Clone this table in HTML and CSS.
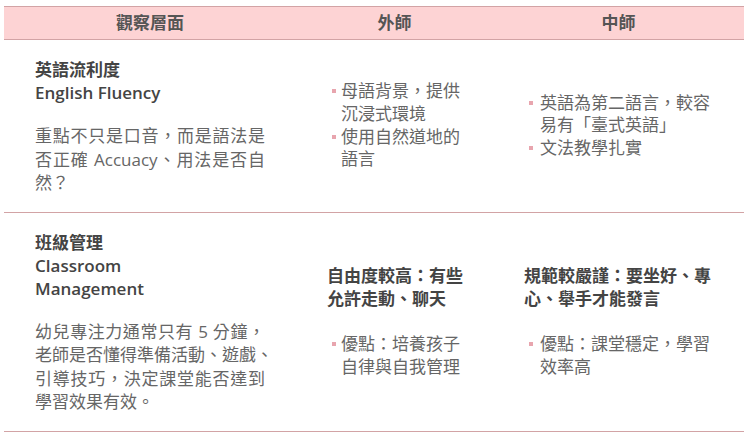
FILE: index.html
```html
<!DOCTYPE html>
<html lang="zh-Hant">
<head>
<meta charset="utf-8">
<title>外師與中師比較</title>
<link rel="stylesheet" href="styles.css">
</head>
<body>
<table class="cmp">
  <colgroup>
    <col class="c1">
    <col class="c2">
    <col class="c3">
  </colgroup>
  <thead>
    <tr><th>觀察層面</th><th>外師</th><th>中師</th></tr>
  </thead>
  <tbody>
    <tr>
      <td class="aspect">
        <p class="title">英語流利度<br>English Fluency</p>
        <p class="desc">重點不只是口音，而是語法是否正確 Accuacy、用法是否自然？</p>
      </td>
      <td class="mid">
        <ul class="pts">
          <li>母語背景，提供沉浸式環境</li>
          <li>使用自然道地的語言</li>
        </ul>
      </td>
      <td class="mid right">
        <ul class="pts">
          <li>英語為第二語言，較容易有「臺式英語」</li>
          <li>文法教學扎實</li>
        </ul>
      </td>
    </tr>
    <tr>
      <td class="aspect">
        <p class="title">班級管理<br>Classroom<br>Management</p>
        <p class="desc">幼兒專注力通常只有 5 分鐘，<span class="keep">老師是否懂得準備活動、遊戲、</span>引導技巧，決定課堂能否達到學習效果有效。</p>
      </td>
      <td class="mid">
        <p class="lead">自由度較高：有些允許走動、聊天</p>
        <ul class="pts">
          <li>優點：培養孩子自律與自我管理</li>
        </ul>
      </td>
      <td class="mid right">
        <p class="lead">規範較嚴謹：要坐好、專心、舉手才能發言</p>
        <ul class="pts">
          <li>優點：課堂穩定，學習效率高</li>
        </ul>
      </td>
    </tr>
  </tbody>
</table>
</body>
</html>
```
FILE: styles.css
```css
html, body {
  margin: 0;
  padding: 0;
  background: #ffffff;
}

body {
  font-family: "Open Sans", "Noto Sans CJK TC", sans-serif;
  font-size: 17px;
  color: #666666;
}

.cmp {
  margin: 6px 0 0 4px;
  width: 740px;
  border-collapse: collapse;
  table-layout: fixed;
}

.c1 { width: 292px; }
.c2 { width: 197px; }
.c3 { width: 251px; }

.cmp th {
  background: #fdd3d4;
  color: #555555;
  font-weight: 600;
  font-size: 17px;
  line-height: 24px;
  padding: 4px 0;
  text-align: center;
  border-top: 1px solid #d2a3a5;
  border-bottom: 1px solid #d2a3a5;
}

.cmp td {
  border-bottom: 1px solid #d2a3a5;
  vertical-align: middle;
  padding: 0;
}

.aspect {
  padding: 18px 31px 17px 31px !important;
  vertical-align: top;
}

.title {
  margin: 0;
  font-weight: 600;
  color: #444444;
  line-height: 23px;
}

.desc {
  margin: 20px 0 0 0;
  line-height: 23.5px;
  text-align: justify;
}

.keep {
  white-space: nowrap;
}

.mid {
  padding: 0 28px 0 31px !important;
}

.lead {
  margin: 0 0 23px 0;
  font-weight: 600;
  color: #444444;
  line-height: 23px;
}

.pts {
  list-style: none;
  margin: 0;
  padding: 0;
}

.pts li {
  position: relative;
  padding-left: 14px;
  line-height: 22.7px;
}

.right .pts li {
  padding-left: 16px;
}

.pts li::before {
  content: "";
  position: absolute;
  left: 5px;
  top: 9px;
  width: 4px;
  height: 4px;
  background: #e8a5ae;
}
```
